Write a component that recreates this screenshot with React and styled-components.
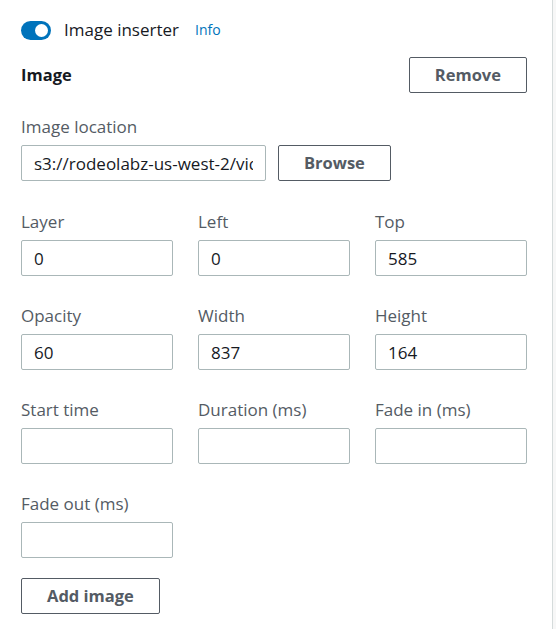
import React from "react";
import styled, { createGlobalStyle } from "styled-components";

const Global = createGlobalStyle`
  html, body { margin: 0; padding: 0; background: #f7f7f7; }
  body { font-family: "Open Sans", "Liberation Sans", sans-serif; color: #16191f; }
  * { box-sizing: border-box; }
`;

const Panel = styled.div`
  width: 553px;
  min-height: 629px;
  background: #ffffff;
  border-right: 1px solid #d5dbdb;
  padding: 20px 25px 16px 21px;
  display: flex;
  flex-direction: column;
`;

const ToggleRow = styled.div`
  display: flex;
  align-items: center;
  height: 20px;
  font-size: 17px;
  line-height: 20px;
`;

const Switch = styled.span`
  position: relative;
  width: 30px;
  height: 19px;
  border-radius: 10px;
  background: ${(p) => (p.$on ? "#0073bb" : "#aab7b8")};
  margin-right: 13px;
  flex: none;
  &::after {
    content: "";
    position: absolute;
    top: 3px;
    left: ${(p) => (p.$on ? "14px" : "3px")};
    width: 13px;
    height: 13px;
    border-radius: 50%;
    background: #ffffff;
  }
`;

const ToggleLabel = styled.span`
  color: #16191f;
`;

const InfoLink = styled.a`
  margin-left: 16px;
  font-size: 14px;
  font-weight: 500;
  color: #0073bb;
  text-decoration: none;
`;

const Header = styled.div`
  display: flex;
  align-items: center;
  justify-content: space-between;
  margin-top: 17px;
`;

const Title = styled.h2`
  margin: 0;
  font-size: 16.5px;
  font-weight: 700;
  line-height: 20px;
  color: #16191f;
`;

const Button = styled.button`
  height: 36px;
  padding: 0 25px;
  border: 1px solid #545b64;
  border-radius: 2px;
  background: #ffffff;
  color: #545b64;
  font-family: inherit;
  font-size: 16.5px;
  font-weight: 700;
  line-height: 20px;
  cursor: pointer;
  white-space: nowrap;
`;

const Field = styled.div`
  display: flex;
  flex-direction: column;
  margin-top: ${(p) => p.$mt || 0}px;
`;

const Label = styled.label`
  font-size: 17px;
  line-height: 20px;
  color: #545b64;
  margin-bottom: 8px;
`;

const Input = styled.input`
  height: 36px;
  width: ${(p) => p.$w || "100%"};
  padding: 0 12px;
  border: 1px solid #aab7b8;
  border-radius: 2px;
  background: #ffffff;
  font-family: inherit;
  font-size: 17px;
  color: #16191f;
  outline: none;
`;

const InlineRow = styled.div`
  display: flex;
  align-items: center;
  gap: 12px;
`;

const Grid = styled.div`
  display: grid;
  grid-template-columns: repeat(3, 1fr);
  column-gap: 25px;
  row-gap: 30px;
  margin-top: 31px;
`;

const Footer = styled.div`
  margin-top: 20px;
`;

const fields = [
  ["Layer", "0"],
  ["Left", "0"],
  ["Top", "585"],
  ["Opacity", "60"],
  ["Width", "837"],
  ["Height", "164"],
  ["Start time", ""],
  ["Duration (ms)", ""],
  ["Fade in (ms)", ""],
  ["Fade out (ms)", ""],
];

export default function App() {
  return (
    <>
      <Global />
      <Panel>
        <ToggleRow>
          <Switch $on />
          <ToggleLabel>Image inserter</ToggleLabel>
          <InfoLink href="#">Info</InfoLink>
        </ToggleRow>
        <Header>
          <Title>Image</Title>
          <Button>Remove</Button>
        </Header>
        <Field $mt={24}>
          <Label>Image location</Label>
          <InlineRow>
            <Input
              $w="245px"
              readOnly
              value="s3://rodeolabz-us-west-2/video-assets/overlay.png"
            />
            <Button>Browse</Button>
          </InlineRow>
        </Field>
        <Grid>
          {fields.map(([label, value]) => (
            <Field key={label}>
              <Label>{label}</Label>
              <Input readOnly value={value} />
            </Field>
          ))}
        </Grid>
        <Footer>
          <Button>Add image</Button>
        </Footer>
      </Panel>
    </>
  );
}
